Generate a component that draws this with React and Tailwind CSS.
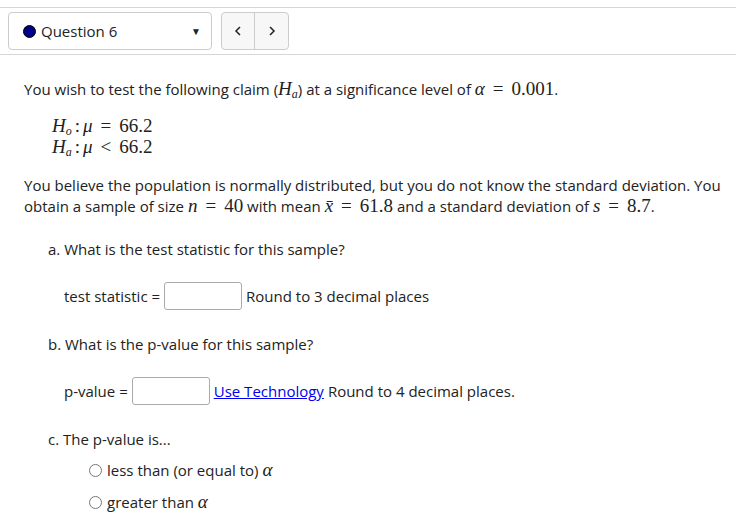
import { useState } from 'react';

const M = ({ children }) => (
  <span className="font-['Liberation_Serif',serif] text-[19px] leading-none">{children}</span>
);
const V = ({ children }) => <i className="font-['Liberation_Serif',serif]">{children}</i>;
const R = ({ children }) => <span className="mx-[8px]">{children}</span>;
const Sub = ({ children }) => <sub className="text-[12px] italic leading-none">{children}</sub>;

function Radio({ children }) {
  return (
    <label className="flex items-center gap-[5px] h-[20px]">
      <span className="w-[13px] h-[13px] rounded-full border border-[#777] bg-white" />
      <span>{children}</span>
    </label>
  );
}

export default function App() {
  const [stat, setStat] = useState('');
  const [pval, setPval] = useState('');

  return (
    <div className="w-[736px] h-[532px] bg-white text-[#222] font-['Open_Sans',sans-serif] text-[15px] overflow-hidden">
      <div className="pt-[7px]">
        <div className="border-t border-b border-[#d6d6d6] flex items-center gap-[9px] px-[8px] h-[48px]">
          <div className="w-[204px] h-[38px] border border-[#ccc] rounded-[4px] flex items-center pl-[14px] pr-[10px]">
            <span className="w-[13px] h-[13px] rounded-full bg-[#00008b] border border-black" />
            <span className="ml-[5px] text-[#222] text-[15px]">Question 6</span>
            <span className="ml-auto text-[10px]">▼</span>
          </div>
          <div className="flex h-[38px] border border-[#ccc] rounded-[4px] bg-[#f7f7f7] overflow-hidden">
            <button className="w-[33px] flex items-center justify-center border-r border-[#ccc]">
              <svg width="8" height="10" viewBox="0 0 8 10"><path d="M6 1 L2 5 L6 9" fill="none" stroke="#222" strokeWidth="1.5" /></svg>
            </button>
            <button className="w-[33px] flex items-center justify-center">
              <svg width="8" height="10" viewBox="0 0 8 10"><path d="M2 1 L6 5 L2 9" fill="none" stroke="#222" strokeWidth="1.5" /></svg>
            </button>
          </div>
        </div>
      </div>

      <div className="pl-[24px] pr-[6px] pt-[23px]">
        <p className="leading-[22px]">
          You wish to test the following claim (<M><V>H</V><Sub>a</Sub></M>) at a significance level of <M><V>α</V><R>=</R>0.001</M>.
        </p>

        <div className="pl-[28px] pt-[16px] leading-[21px]">
          <div className="h-[21px]"><M><V>H</V><Sub>o</Sub><span className="mx-[3px]">:</span><V>μ</V><R>=</R>66.2</M></div>
          <div className="h-[21px]"><M><V>H</V><Sub>a</Sub><span className="mx-[3px]">:</span><V>μ</V><R>&lt;</R>66.2</M></div>
        </div>

        <p className="pt-[17px] leading-[21px]">
          You believe the population is normally distributed, but you do not know the standard deviation. You obtain a sample of size <M><V>n</V><R>=</R>40</M> with mean <M><V>x̄</V><R>=</R>61.8</M> and a standard deviation of <M><V>s</V><R>=</R>8.7</M>.
        </p>

        <div className="pl-[24px] pt-[21px]">
          <p className="leading-[22px]">a. What is the test statistic for this sample?</p>
          <div className="pl-[16px] pt-[22px] flex items-center">
            <span>test statistic =</span>
            <input value={stat} onChange={(e) => setStat(e.target.value)} className="ml-[4px] w-[78px] h-[28px] border border-[#aaa] rounded-[3px]" />
            <span className="ml-[4px]">Round to 3 decimal places</span>
          </div>

          <p className="pt-[23px] leading-[22px]">b. What is the p-value for this sample?</p>
          <div className="pl-[16px] pt-[22px] flex items-center">
            <span>p-value =</span>
            <input value={pval} onChange={(e) => setPval(e.target.value)} className="ml-[4px] w-[78px] h-[28px] border border-[#aaa] rounded-[3px]" />
            <a href="#" className="ml-[4px] text-[#0000ee] underline">Use Technology</a>
            <span className="ml-[4px]">Round to 4 decimal places.</span>
          </div>

          <p className="pt-[23px] leading-[22px]">c. The p-value is...</p>
          <div className="pl-[41px] pt-[10px] flex flex-col gap-[12px]">
            <Radio>less than (or equal to) <M><V>α</V></M></Radio>
            <Radio>greater than <M><V>α</V></M></Radio>
          </div>
        </div>
      </div>
    </div>
  );
}
